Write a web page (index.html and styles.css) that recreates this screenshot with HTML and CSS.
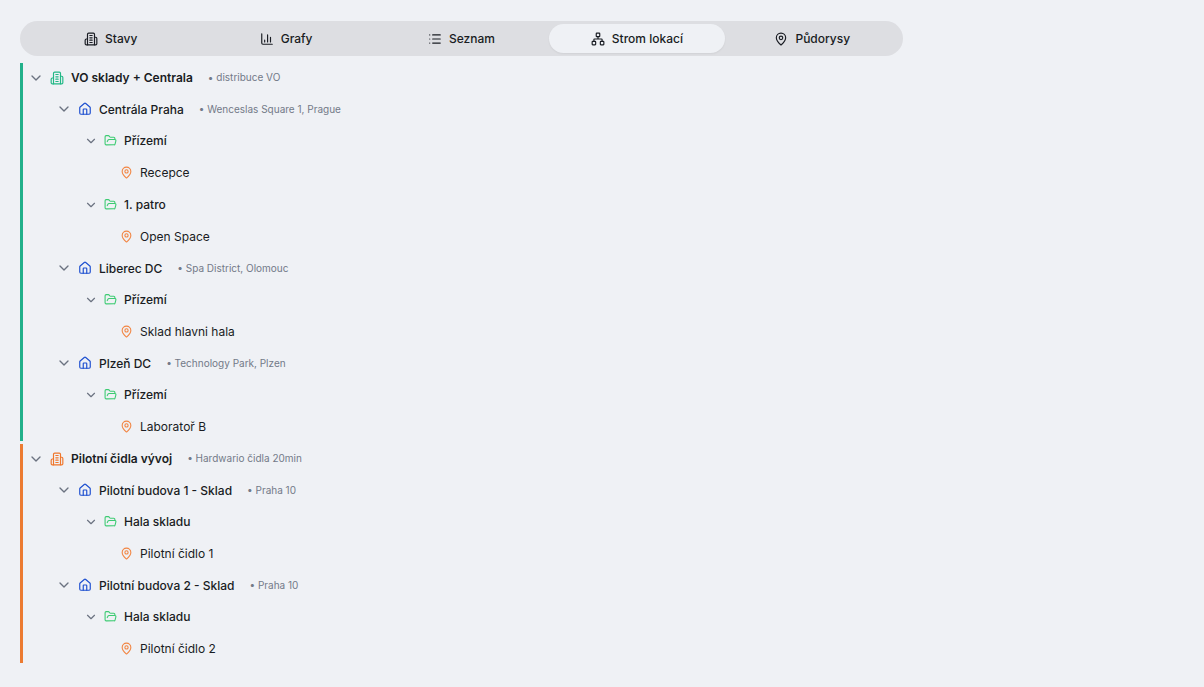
FILE: index.html
```html
<!DOCTYPE html>
<html lang="cs">
<head>
<meta charset="utf-8">
<meta name="viewport" content="width=device-width, initial-scale=1">
<title>Strom lokací</title>
<link rel="stylesheet" href="styles.css">
</head>
<body>
<svg class="sprite" aria-hidden="true">
  <symbol id="building" viewBox="0 0 24 24"><path d="M6 22V4a2 2 0 0 1 2-2h8a2 2 0 0 1 2 2v18Z"/><path d="M6 12H4a2 2 0 0 0-2 2v6a2 2 0 0 0 2 2h2M18 9h2a2 2 0 0 1 2 2v9a2 2 0 0 1-2 2h-2M10 6h4M10 10h4M10 14h4M10 18h4"/></symbol>
  <symbol id="chart" viewBox="0 0 24 24"><path d="M3 3v16a2 2 0 0 0 2 2h16M18 17V9M13 17V5M8 17v-3"/></symbol>
  <symbol id="list" viewBox="0 0 24 24"><path d="M3 5h.01M3 12h.01M3 19h.01M8 5h13M8 12h13M8 19h13"/></symbol>
  <symbol id="network" viewBox="0 0 24 24"><rect x="16" y="16" width="6" height="6" rx="1"/><rect x="2" y="16" width="6" height="6" rx="1"/><rect x="9" y="2" width="6" height="6" rx="1"/><path d="M5 16v-3a1 1 0 0 1 1-1h12a1 1 0 0 1 1 1v3M12 12V8"/></symbol>
  <symbol id="pin" viewBox="0 0 24 24"><path d="M20 10c0 4.993-5.539 10.193-7.399 11.799a1 1 0 0 1-1.202 0C9.539 20.193 4 14.993 4 10a8 8 0 0 1 16 0"/><circle cx="12" cy="10" r="3"/></symbol>
  <symbol id="house" viewBox="0 0 24 24"><path d="M15 21v-8a1 1 0 0 0-1-1h-4a1 1 0 0 0-1 1v8"/><path d="M3 10a2 2 0 0 1 .709-1.528l7-5.999a2 2 0 0 1 2.582 0l7 5.999A2 2 0 0 1 21 10v9a2 2 0 0 1-2 2H5a2 2 0 0 1-2-2z"/></symbol>
  <symbol id="folder" viewBox="0 0 24 24"><path d="m6 14 1.5-2.9A2 2 0 0 1 9.24 10H20a2 2 0 0 1 1.94 2.5l-1.54 6a2 2 0 0 1-1.95 1.5H4a2 2 0 0 1-2-2V5a2 2 0 0 1 2-2h3.9a2 2 0 0 1 1.69.9l.81 1.2a2 2 0 0 0 1.67.9H18a2 2 0 0 1 2 2v2"/></symbol>
  <symbol id="chevron" viewBox="0 0 24 24"><path d="m6 9 6 6 6-6"/></symbol>
</svg>
<main class="page">
  <nav class="tabs" role="tablist" aria-label="Zobrazení">
    <button class="tab" role="tab" aria-selected="false"><svg class="icon"><use href="#building"/></svg>Stavy</button>
    <button class="tab" role="tab" aria-selected="false"><svg class="icon"><use href="#chart"/></svg>Grafy</button>
    <button class="tab" role="tab" aria-selected="false"><svg class="icon"><use href="#list"/></svg>Seznam</button>
    <button class="tab tab-active" role="tab" aria-selected="true"><svg class="icon"><use href="#network"/></svg>Strom lokací</button>
    <button class="tab" role="tab" aria-selected="false"><svg class="icon"><use href="#pin"/></svg>Půdorysy</button>
  </nav>
  <ul class="tree">
    <li class="group group-green">
      <div class="row row-root"><button class="toggle" aria-label="Sbalit VO sklady + Centrala" aria-expanded="true"><svg class="chevron"><use href="#chevron"/></svg></button><svg class="icon"><use href="#building"/></svg><span class="name">VO sklady + Centrala</span><span class="note">• distribuce VO</span></div>
      <ul class="branch">
        <li class="node">
          <div class="row row-house"><button class="toggle" aria-label="Sbalit Centrála Praha" aria-expanded="true"><svg class="chevron"><use href="#chevron"/></svg></button><svg class="icon"><use href="#house"/></svg><span class="name">Centrála Praha</span><span class="note">• Wenceslas Square 1, Prague</span></div>
          <ul class="branch">
            <li class="node">
              <div class="row row-floor"><button class="toggle" aria-label="Sbalit Přízemí" aria-expanded="true"><svg class="chevron"><use href="#chevron"/></svg></button><svg class="icon"><use href="#folder"/></svg><span class="name">Přízemí</span></div>
              <ul class="branch"><li class="row row-place"><svg class="icon"><use href="#pin"/></svg><span class="name">Recepce</span></li></ul>
            </li>
            <li class="node">
              <div class="row row-floor"><button class="toggle" aria-label="Sbalit 1. patro" aria-expanded="true"><svg class="chevron"><use href="#chevron"/></svg></button><svg class="icon"><use href="#folder"/></svg><span class="name">1. patro</span></div>
              <ul class="branch"><li class="row row-place"><svg class="icon"><use href="#pin"/></svg><span class="name">Open Space</span></li></ul>
            </li>
          </ul>
        </li>
        <li class="node">
          <div class="row row-house"><button class="toggle" aria-label="Sbalit Liberec DC" aria-expanded="true"><svg class="chevron"><use href="#chevron"/></svg></button><svg class="icon"><use href="#house"/></svg><span class="name">Liberec DC</span><span class="note">• Spa District, Olomouc</span></div>
          <ul class="branch">
            <li class="node">
              <div class="row row-floor"><button class="toggle" aria-label="Sbalit Přízemí" aria-expanded="true"><svg class="chevron"><use href="#chevron"/></svg></button><svg class="icon"><use href="#folder"/></svg><span class="name">Přízemí</span></div>
              <ul class="branch"><li class="row row-place"><svg class="icon"><use href="#pin"/></svg><span class="name">Sklad hlavni hala</span></li></ul>
            </li>
          </ul>
        </li>
        <li class="node">
          <div class="row row-house"><button class="toggle" aria-label="Sbalit Plzeň DC" aria-expanded="true"><svg class="chevron"><use href="#chevron"/></svg></button><svg class="icon"><use href="#house"/></svg><span class="name">Plzeň DC</span><span class="note">• Technology Park, Plzen</span></div>
          <ul class="branch">
            <li class="node">
              <div class="row row-floor"><button class="toggle" aria-label="Sbalit Přízemí" aria-expanded="true"><svg class="chevron"><use href="#chevron"/></svg></button><svg class="icon"><use href="#folder"/></svg><span class="name">Přízemí</span></div>
              <ul class="branch"><li class="row row-place"><svg class="icon"><use href="#pin"/></svg><span class="name">Laboratoř B</span></li></ul>
            </li>
          </ul>
        </li>
      </ul>
    </li>
    <li class="group group-orange">
      <div class="row row-root"><button class="toggle" aria-label="Sbalit Pilotní čidla vývoj" aria-expanded="true"><svg class="chevron"><use href="#chevron"/></svg></button><svg class="icon"><use href="#building"/></svg><span class="name">Pilotní čidla vývoj</span><span class="note">• Hardwario čidla 20min</span></div>
      <ul class="branch">
        <li class="node">
          <div class="row row-house"><button class="toggle" aria-label="Sbalit Pilotní budova 1 - Sklad" aria-expanded="true"><svg class="chevron"><use href="#chevron"/></svg></button><svg class="icon"><use href="#house"/></svg><span class="name">Pilotní budova 1 - Sklad</span><span class="note">• Praha 10</span></div>
          <ul class="branch">
            <li class="node">
              <div class="row row-floor"><button class="toggle" aria-label="Sbalit Hala skladu" aria-expanded="true"><svg class="chevron"><use href="#chevron"/></svg></button><svg class="icon"><use href="#folder"/></svg><span class="name">Hala skladu</span></div>
              <ul class="branch"><li class="row row-place"><svg class="icon"><use href="#pin"/></svg><span class="name">Pilotní čidlo 1</span></li></ul>
            </li>
          </ul>
        </li>
        <li class="node">
          <div class="row row-house"><button class="toggle" aria-label="Sbalit Pilotní budova 2 - Sklad" aria-expanded="true"><svg class="chevron"><use href="#chevron"/></svg></button><svg class="icon"><use href="#house"/></svg><span class="name">Pilotní budova 2 - Sklad</span><span class="note">• Praha 10</span></div>
          <ul class="branch">
            <li class="node">
              <div class="row row-floor"><button class="toggle" aria-label="Sbalit Hala skladu" aria-expanded="true"><svg class="chevron"><use href="#chevron"/></svg></button><svg class="icon"><use href="#folder"/></svg><span class="name">Hala skladu</span></div>
              <ul class="branch"><li class="row row-place"><svg class="icon"><use href="#pin"/></svg><span class="name">Pilotní čidlo 2</span></li></ul>
            </li>
          </ul>
        </li>
      </ul>
    </li>
  </ul>
</main>
</body>
</html>
```

FILE: styles.css
```css
* { box-sizing: border-box; }

body {
  margin: 0;
  background: #eff1f5;
  color: #191c23;
  font-family: Inter, "Liberation Sans", sans-serif;
  font-size: 12px;
  line-height: 19px;
}

button {
  padding: 0;
  border: 0;
  background: none;
  color: inherit;
  font: inherit;
  cursor: pointer;
}

ul { margin: 0; padding: 0; list-style: none; }

.sprite { display: none; }

.page {
  display: flex;
  flex-direction: column;
  gap: 7px;
  padding: 21px 20px;
}

.icon, .chevron {
  flex: none;
  width: 14px;
  height: 14px;
  fill: none;
  stroke: currentColor;
  stroke-width: 2;
  stroke-linecap: round;
  stroke-linejoin: round;
}

/* Tabs */
.tabs {
  display: grid;
  grid-template-columns: repeat(5, 1fr);
  max-width: 883px;
  padding: 3px;
  border-radius: 18px;
  background: #dddee2;
}

.tab {
  display: flex;
  align-items: center;
  justify-content: center;
  gap: 7px;
  min-height: 29px;
  border-radius: 15px;
  font-weight: 500;
}

.tab-active {
  background: #eff1f5;
  box-shadow: 0 1px 2px rgba(0, 0, 0, 0.06);
}

/* Location tree */
.tree, .branch, .group, .node {
  display: flex;
  flex-direction: column;
  gap: 3px;
}

.branch { padding-left: 28px; }

.group {
  padding-left: 5px;
  border-left: 3px solid;
}

.group-green { border-color: #22b08a; }
.group-orange { border-color: #ec7b31; }

.row {
  display: flex;
  align-items: center;
  min-height: 29px;
}

.toggle {
  display: flex;
  margin-right: 6px;
  color: #6b7280;
}

.chevron { width: 16px; height: 16px; }
.name { margin-left: 7px; font-weight: 500; }
.note { margin-left: 15px; color: #737a88; font-size: 10px; }

.row-root .name { font-weight: 600; }
.group-green > .row-root .icon { color: #22b886; }
.group-orange > .row-root .icon { color: #f0762b; }

.row-house { min-height: 28px; }
.row-house .icon { color: #1d4fd0; }

.row-floor .chevron { width: 14px; height: 14px; }
.row-floor .icon { width: 13px; height: 13px; color: #3ccb72; }

.row-place { padding-left: 8px; }
.row-place .icon { width: 13px; height: 13px; color: #f28440; }
.row-place .name { font-weight: 400; }
```
